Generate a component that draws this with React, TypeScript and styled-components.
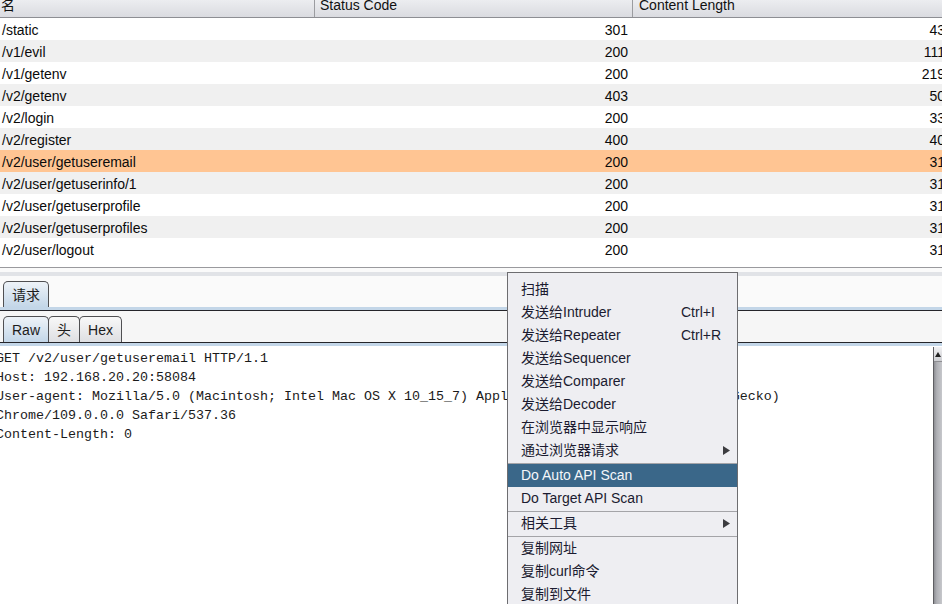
import React from "react";
import styled, { createGlobalStyle } from "styled-components";

const GlobalStyle = createGlobalStyle`
  html, body { margin: 0; padding: 0; background: #fff; overflow: hidden; }
  body { font-family: "Liberation Sans", "Noto Sans CJK SC", sans-serif; }
`;

const Screen = styled.div`
  position: relative;
  width: 942px;
  height: 604px;
  overflow: hidden;
  display: flex;
  flex-direction: column;
  background: #fff;
`;

/* ---------- table ---------- */
const Table = styled.div`
  flex: none;
  width: 949px;
  height: 268px;
  box-sizing: border-box;
  border-bottom: 1px solid #9a9a9e;
  background: #fff;
`;

const HeaderRow = styled.div`
  display: grid;
  grid-template-columns: 315px 318px 316px;
  height: 17px;
  border-bottom: 1px solid #8d8e93;
  background: linear-gradient(#ecedf0, #dadbe0);
`;

const HeaderCell = styled.div<{ $pad: number }>`
  box-sizing: border-box;
  padding-left: ${(p) => p.$pad}px;
  border-right: 1px solid #9b9ca0;
  font-size: 14px;
  line-height: 11px;
  color: #111;
  white-space: nowrap;
  overflow: hidden;
`;

const Row = styled.div<{ $bg: string }>`
  display: grid;
  grid-template-columns: 315px 318px 316px;
  height: 22px;
  font-size: 14px;
  color: #0b0b0b;
  background: ${(p) => p.$bg};
`;

const Cell = styled.div<{ $right?: boolean; $pad: number }>`
  box-sizing: border-box;
  height: 22px;
  line-height: 24px;
  white-space: nowrap;
  overflow: hidden;
  text-align: ${(p) => (p.$right ? "right" : "left")};
  ${(p) => (p.$right ? `padding-right: ${p.$pad}px;` : `padding-left: ${p.$pad}px;`)}
`;

/* ---------- lower pane ---------- */
const Lower = styled.div`
  flex: 1;
  display: flex;
  flex-direction: column;
  background: #fafafa;
  min-height: 0;
`;

const SplitBar = styled.div`
  flex: none;
  height: 4px;
  margin: 4px 0 5px;
  background: #e1e3e7;
`;

const TabStrip = styled.div`
  flex: none;
  display: flex;
  align-items: flex-end;
  height: 26px;
  padding-left: 3px;
`;

const Tab = styled.div<{ $active?: boolean }>`
  box-sizing: border-box;
  height: 26px;
  padding: 0 8px;
  margin-right: -1px;
  border: 1px solid #4f4f52;
  border-bottom: none;
  border-radius: 5px 5px 0 0;
  font-size: 14px;
  line-height: 26px;
  color: #1c1c1c;
  background: ${(p) =>
    p.$active
      ? "linear-gradient(#eef3f8, #c3d6e8)"
      : "linear-gradient(#f8f8f8, #dedfe2)"};
`;

const Edge = styled.div<{ $darkFirst?: boolean }>`
  flex: none;
  height: 3px;
  background: #c3d6e8;
  ${(p) =>
    p.$darkFirst
      ? "border-top: 1px solid #25252a;"
      : "border-bottom: 1px solid #25252a;"}
`;

const InnerArea = styled.div`
  flex: none;
  padding-top: 5px;
  background: #f6f6f6;
`;

const TextPanel = styled.div`
  flex: 1;
  display: flex;
  background: #fff;
  min-height: 0;
`;

const RawText = styled.div`
  flex: 1;
  min-width: 0;
  margin-left: -4px;
  padding-top: 3px;
  font-family: "Liberation Mono", monospace;
  font-size: 13.33px;
  line-height: 19px;
  color: #1a1a1a;
  white-space: pre;
  overflow: hidden;
`;

const Scrollbar = styled.div`
  flex: none;
  width: 9px;
  margin-top: 1px;
  box-sizing: border-box;
  border-left: 1px solid #5f5f63;
  background-color: #b4b5b9;
  background-image: linear-gradient(90deg, #8f9095, #afb0b5 35%, #c6c7cb);
`;

const ScrollButton = styled.div`
  height: 15px;
  box-sizing: border-box;
  border-bottom: 1px solid #8e8e92;
  background-image: linear-gradient(#f2f2f4, #cdced2);
  display: flex;
  align-items: center;
  justify-content: center;
`;

/* ---------- popup menu ---------- */
const Menu = styled.div`
  position: absolute;
  left: 507px;
  top: 272px;
  width: 231px;
  height: 340px;
  box-sizing: border-box;
  padding-top: 5px;
  background: #eeeef2;
  border: 1px solid #6d6d70;
  font-size: 14px;
  color: #1b1b30;
`;

const MenuItem = styled.div<{ $hot?: boolean }>`
  display: flex;
  align-items: center;
  height: 23px;
  line-height: 23px;
  padding-left: 13px;
  white-space: nowrap;
  background: ${(p) => (p.$hot ? "#3a6789" : "transparent")};
  color: ${(p) => (p.$hot ? "#f4f6fa" : "inherit")};
`;

const Label = styled.span`
  flex: 1;
`;

const Shortcut = styled.span`
  width: 56px;
`;

const Arrow = styled.svg`
  margin-right: 7px;
`;

const Separator = styled.div`
  height: 1px;
  border-bottom: 1px solid #a4a4a8;
`;

type Entry = { name: string; code: string; len: string };

const rows: Entry[] = [
  { name: "/static", code: "301", len: "43" },
  { name: "/v1/evil", code: "200", len: "111" },
  { name: "/v1/getenv", code: "200", len: "219" },
  { name: "/v2/getenv", code: "403", len: "50" },
  { name: "/v2/login", code: "200", len: "33" },
  { name: "/v2/register", code: "400", len: "40" },
  { name: "/v2/user/getuseremail", code: "200", len: "31" },
  { name: "/v2/user/getuserinfo/1", code: "200", len: "31" },
  { name: "/v2/user/getuserprofile", code: "200", len: "31" },
  { name: "/v2/user/getuserprofiles", code: "200", len: "31" },
  { name: "/v2/user/logout", code: "200", len: "31" },
];

const requestLines = [
  "GET /v2/user/getuseremail HTTP/1.1",
  "Host: 192.168.20.20:58084",
  "User-agent: Mozilla/5.0 (Macintosh; Intel Mac OS X 10_15_7) AppleWebKit/537.36 (KHTML, like Gecko)",
  "Chrome/109.0.0.0 Safari/537.36",
  "Content-Length: 0",
];

type MenuEntry =
  | { kind: "item"; label: string; shortcut?: string; sub?: boolean; hot?: boolean }
  | { kind: "sep" };

const menu: MenuEntry[] = [
  { kind: "item", label: "扫描" },
  { kind: "item", label: "发送给Intruder", shortcut: "Ctrl+I" },
  { kind: "item", label: "发送给Repeater", shortcut: "Ctrl+R" },
  { kind: "item", label: "发送给Sequencer" },
  { kind: "item", label: "发送给Comparer" },
  { kind: "item", label: "发送给Decoder" },
  { kind: "item", label: "在浏览器中显示响应" },
  { kind: "item", label: "通过浏览器请求", sub: true },
  { kind: "sep" },
  { kind: "item", label: "Do Auto API Scan", hot: true },
  { kind: "item", label: "Do Target API Scan" },
  { kind: "sep" },
  { kind: "item", label: "相关工具", sub: true },
  { kind: "sep" },
  { kind: "item", label: "复制网址" },
  { kind: "item", label: "复制curl命令" },
  { kind: "item", label: "复制到文件" },
];

function rowBg(i: number): string {
  if (i === 6) return "#ffc593";
  return i % 2 === 0 ? "#ffffff" : "#f0f0f0";
}

export default function App() {
  return (
    <Screen>
      <GlobalStyle />
      <Table>
        <HeaderRow>
          <HeaderCell $pad={1}>名</HeaderCell>
          <HeaderCell $pad={5}>Status Code</HeaderCell>
          <HeaderCell $pad={6}>Content Length</HeaderCell>
        </HeaderRow>
        {rows.map((r, i) => (
          <Row key={r.name} $bg={rowBg(i)}>
            <Cell $pad={2}>{r.name}</Cell>
            <Cell $right $pad={5}>{r.code}</Cell>
            <Cell $right $pad={4}>{r.len}</Cell>
          </Row>
        ))}
      </Table>

      <Lower>
        <SplitBar />
        <TabStrip>
          <Tab $active>请求</Tab>
        </TabStrip>
        <Edge />
        <InnerArea>
          <TabStrip>
            <Tab $active>Raw</Tab>
            <Tab>头</Tab>
            <Tab>Hex</Tab>
          </TabStrip>
        </InnerArea>
        <Edge $darkFirst />
        <TextPanel>
          <RawText>
            {requestLines.map((l) => (
              <div key={l}>{l}</div>
            ))}
          </RawText>
          <Scrollbar>
            <ScrollButton>
              <svg width="6" height="5" viewBox="0 0 6 5">
                <path d="M3 0 L6 5 L0 5 Z" fill="#222" />
              </svg>
            </ScrollButton>
          </Scrollbar>
        </TextPanel>
      </Lower>

      <Menu>
        {menu.map((m, i) =>
          m.kind === "sep" ? (
            <Separator key={i} />
          ) : (
            <MenuItem key={i} $hot={m.hot}>
              <Label>{m.label}</Label>
              {m.shortcut && <Shortcut>{m.shortcut}</Shortcut>}
              {m.sub && (
                <Arrow width="7" height="9" viewBox="0 0 7 9">
                  <path d="M0 0 L7 4.5 L0 9 Z" fill="#3c3c40" />
                </Arrow>
              )}
            </MenuItem>
          )
        )}
      </Menu>
    </Screen>
  );
}
